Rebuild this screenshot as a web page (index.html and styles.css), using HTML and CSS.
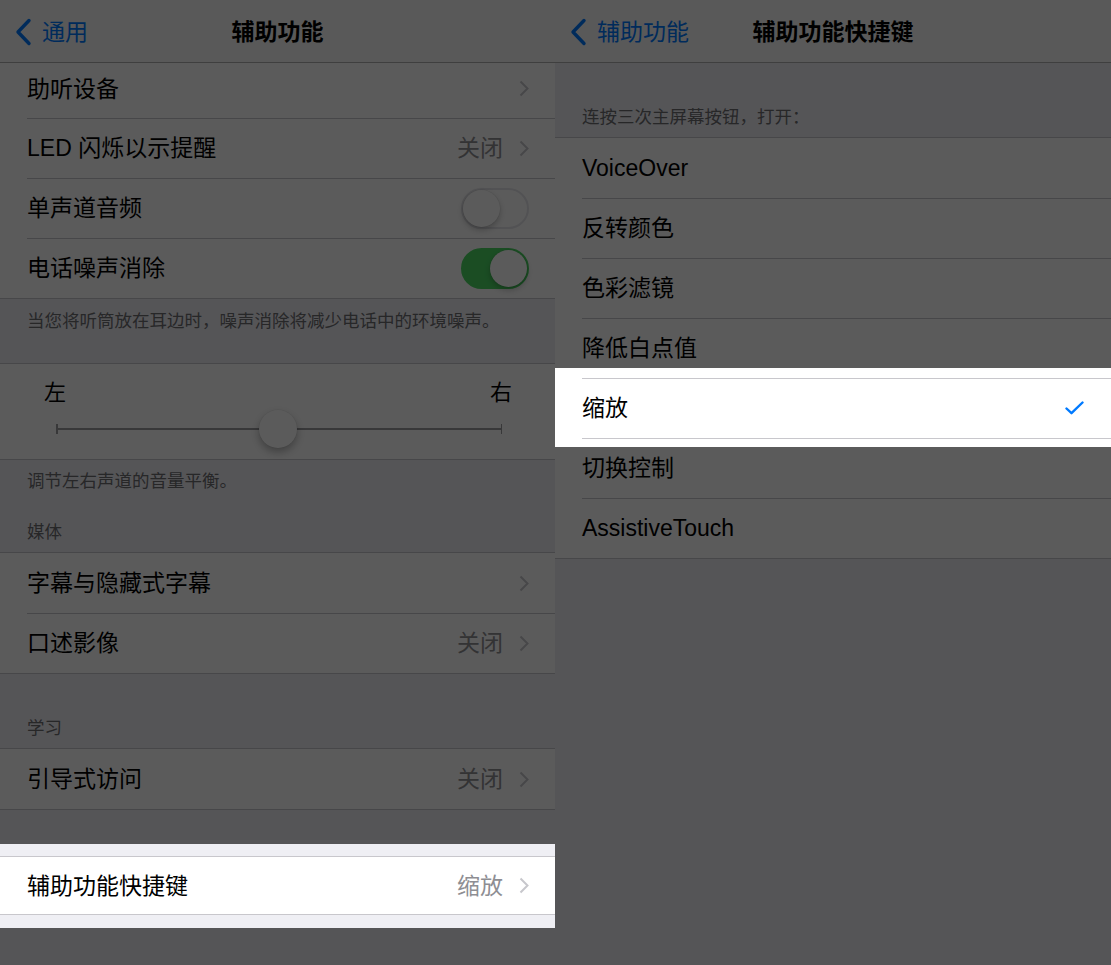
FILE: index.html
```html
<!DOCTYPE html>
<html lang="zh-CN">
<head>
<meta charset="utf-8">
<title>辅助功能</title>
<link rel="stylesheet" href="styles.css">
</head>
<body>
<div class="screen">
  <section class="panel panel-left">
    <header class="nav">
      <div class="back">
        <svg class="back-icon" width="17" height="28" viewBox="0 0 17 28"><polyline points="14,2.5 3,14 14,25.5" fill="none" stroke="#007aff" stroke-width="3.4" stroke-linecap="round" stroke-linejoin="round"/></svg>
        <span>通用</span>
      </div>
      <h1 class="title">辅助功能</h1>
      <div></div>
    </header>

    <div class="group no-top">
      <div class="row row-short"><span class="label">助听设备</span><span class="value"></span><svg class="chev" width="10" height="17" viewBox="0 0 10 17"><polyline points="1.5,1.5 8.5,8.5 1.5,15.5" fill="none" stroke="#c7c7cc" stroke-width="2"/></svg></div>
      <div class="row"><span class="label">LED 闪烁以示提醒</span><span class="value">关闭</span><svg class="chev" width="10" height="17" viewBox="0 0 10 17"><polyline points="1.5,1.5 8.5,8.5 1.5,15.5" fill="none" stroke="#c7c7cc" stroke-width="2"/></svg></div>
      <div class="row"><span class="label">单声道音频</span><span class="switch"><span class="knob"></span></span></div>
      <div class="row"><span class="label">电话噪声消除</span><span class="switch on"><span class="knob"></span></span></div>
    </div>
    <p class="footer footer-noise">当您将听筒放在耳边时，噪声消除将减少电话中的环境噪声。</p>

    <div class="group">
      <div class="slider-cell">
        <div class="slider-labels"><span>左</span><span>右</span></div>
        <div class="slider">
          <span class="tick"></span><span class="line"></span><span class="tick"></span>
          <span class="slider-knob"></span>
        </div>
      </div>
    </div>
    <p class="footer footer-balance">调节左右声道的音量平衡。</p>
    <p class="section-header header-media">媒体</p>

    <div class="group">
      <div class="row"><span class="label">字幕与隐藏式字幕</span><span class="value"></span><svg class="chev" width="10" height="17" viewBox="0 0 10 17"><polyline points="1.5,1.5 8.5,8.5 1.5,15.5" fill="none" stroke="#c7c7cc" stroke-width="2"/></svg></div>
      <div class="row"><span class="label">口述影像</span><span class="value">关闭</span><svg class="chev" width="10" height="17" viewBox="0 0 10 17"><polyline points="1.5,1.5 8.5,8.5 1.5,15.5" fill="none" stroke="#c7c7cc" stroke-width="2"/></svg></div>
    </div>
    <p class="section-header header-learn">学习</p>

    <div class="group">
      <div class="row"><span class="label">引导式访问</span><span class="value">关闭</span><svg class="chev" width="10" height="17" viewBox="0 0 10 17"><polyline points="1.5,1.5 8.5,8.5 1.5,15.5" fill="none" stroke="#c7c7cc" stroke-width="2"/></svg></div>
    </div>

    <div class="group group-shortcut">
      <div class="row row-shortcut"><span class="label">辅助功能快捷键</span><span class="value">缩放</span><svg class="chev" width="10" height="17" viewBox="0 0 10 17"><polyline points="1.5,1.5 8.5,8.5 1.5,15.5" fill="none" stroke="#c7c7cc" stroke-width="2"/></svg></div>
    </div>

    <div class="spotlight spot-left"></div>
  </section>

  <section class="panel panel-right">
    <header class="nav">
      <div class="back">
        <svg class="back-icon" width="17" height="28" viewBox="0 0 17 28"><polyline points="14,2.5 3,14 14,25.5" fill="none" stroke="#007aff" stroke-width="3.4" stroke-linecap="round" stroke-linejoin="round"/></svg>
        <span>辅助功能</span>
      </div>
      <h1 class="title">辅助功能快捷键</h1>
      <div></div>
    </header>

    <p class="section-header header-triple">连按三次主屏幕按钮，打开：</p>
    <div class="group">
      <div class="row"><span class="label">VoiceOver</span></div>
      <div class="row"><span class="label">反转颜色</span></div>
      <div class="row"><span class="label">色彩滤镜</span></div>
      <div class="row"><span class="label">降低白点值</span></div>
      <div class="row"><span class="label">缩放</span><svg class="check" width="19" height="14" viewBox="0 0 19 14"><polyline points="1.5,7.5 6.5,12.2 17.5,1.5" fill="none" stroke="#007aff" stroke-width="2.4" stroke-linecap="round" stroke-linejoin="round"/></svg></div>
      <div class="row"><span class="label">切换控制</span></div>
      <div class="row"><span class="label">AssistiveTouch</span></div>
    </div>

    <div class="spotlight spot-right"></div>
  </section>
</div>
</body>
</html>
```

FILE: styles.css
```css
* {
  box-sizing: border-box;
  margin: 0;
  padding: 0;
}

html,
body {
  width: 1111px;
  height: 965px;
  overflow: hidden;
}

body {
  font-family: "Liberation Sans", "Noto Sans CJK SC", sans-serif;
  background: #efeff4;
  color: #000;
}

.screen {
  display: flex;
  height: 965px;
}

.panel {
  position: relative;
  overflow: hidden;
  height: 965px;
  background: #efeff4;
}

.panel-left {
  width: 555px;
}

.panel-right {
  width: 556px;
}

/* navigation bar */
.nav {
  height: 63px;
  padding-top: 1px;
  background: #f8f8f8;
  border-bottom: 1px solid #b2b2b2;
  display: grid;
  grid-template-columns: 1fr auto 1fr;
  align-items: center;
}

.back {
  display: flex;
  align-items: center;
  gap: 10px;
  padding-left: 15px;
  color: #007aff;
  font-size: 23px;
  line-height: 28px;
}

.title {
  font-size: 23px;
  font-weight: 700;
  line-height: 28px;
}

/* table groups */
.group {
  background: #fff;
  border-top: 1px solid #c8c7cc;
  border-bottom: 1px solid #c8c7cc;
}

.group.no-top {
  border-top: none;
}

.row {
  height: 60px;
  display: flex;
  align-items: center;
  padding: 0 26px 0 27px;
  font-size: 23px;
  line-height: 28px;
}

.row + .row {
  background: linear-gradient(#c8c7cc, #c8c7cc) 27px 0 / 100% 1px no-repeat, #fff;
}

.row-short {
  height: 55px;
  padding-bottom: 4px;
}

.row-shortcut {
  height: 57px;
}

.label {
  white-space: nowrap;
}

.value {
  margin-left: auto;
  margin-right: 16px;
  color: #8e8e93;
  white-space: nowrap;
}

.chev {
  flex: none;
}

.check {
  margin-left: auto;
  margin-right: 1px;
  flex: none;
}

/* switches */
.switch {
  margin-left: auto;
  width: 68px;
  height: 41px;
  border-radius: 21px;
  border: 2px solid #e5e5ea;
  background: #fff;
  display: flex;
  align-items: center;
  flex: none;
}

.switch.on {
  background: #4cd964;
  border-color: #4cd964;
  justify-content: flex-end;
}

.knob {
  width: 37px;
  height: 37px;
  border-radius: 50%;
  background: #fff;
  box-shadow: 0 3px 6px rgba(0, 0, 0, 0.24), 0 0 0 0.5px rgba(0, 0, 0, 0.08);
}

/* footers & headers */
.footer,
.section-header {
  font-size: 17.5px;
  line-height: 24px;
  color: #6d6d72;
  padding: 0 27px;
  white-space: nowrap;
}

.footer-noise {
  height: 64px;
  padding-top: 10px;
}

.footer-balance {
  padding-top: 9px;
  height: 33px;
}

.header-media {
  padding-top: 27px;
  height: 59px;
}

.header-learn {
  padding-top: 42px;
  height: 74px;
}

.header-triple {
  padding-top: 42px;
  height: 74px;
}

.group-shortcut {
  margin-top: 46px;
}

/* slider */
.slider-cell {
  height: 95px;
  padding: 17px 43px 0 44px;
}

.slider-labels {
  display: flex;
  justify-content: space-between;
  font-size: 22px;
  line-height: 24px;
}

.slider {
  position: relative;
  display: flex;
  align-items: center;
  height: 38px;
  margin: 5px 10px 0 12px;
}

.tick {
  width: 1.5px;
  height: 10px;
  background: #9c9ca0;
  flex: none;
}

.line {
  flex: 1;
  height: 1.5px;
  background: #9c9ca0;
}

.slider-knob {
  position: absolute;
  left: 50%;
  top: 0;
  margin-left: -20px;
  width: 38px;
  height: 38px;
  border-radius: 50%;
  background: #fff;
  box-shadow: 0 4px 9px rgba(0, 0, 0, 0.3), 0 0 0 0.5px rgba(0, 0, 0, 0.06);
}

/* dimming overlay with highlighted window */
.spotlight {
  position: absolute;
  left: 0;
  width: 100%;
  box-shadow: 0 0 0 2000px rgba(0, 0, 0, 0.645);
  pointer-events: none;
}

.spot-left {
  top: 844px;
  height: 84px;
}

.spot-right {
  top: 368px;
  height: 79px;
}
```
